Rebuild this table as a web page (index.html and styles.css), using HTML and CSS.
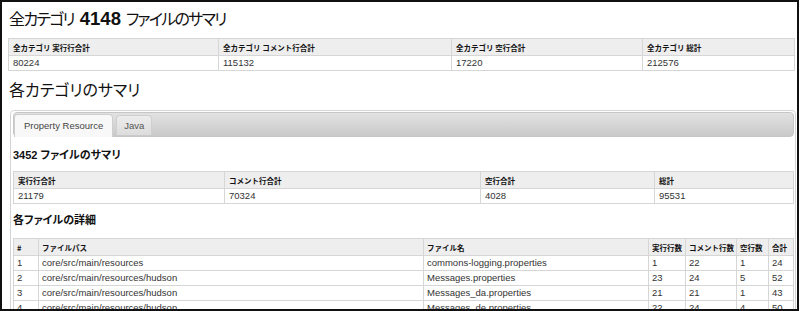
FILE: index.html
```html
<!DOCTYPE html>
<html lang="ja">
<head>
<meta charset="utf-8">
<link rel="stylesheet" href="styles.css">
</head>
<body>
<div class="frame">
  <h1 class="title">全カテゴリ <b>4148</b> ファイルのサマリ</h1>
  <table class="grid all">
    <colgroup><col class="c210"><col class="c233"><col class="c191"><col></colgroup>
    <thead><tr><th>全カテゴリ 実行行合計</th><th>全カテゴリ コメント行合計</th><th>全カテゴリ 空行合計</th><th>全カテゴリ 総計</th></tr></thead>
    <tbody><tr><td>80224</td><td>115132</td><td>17220</td><td>212576</td></tr></tbody>
  </table>
  <h2 class="subtitle">各カテゴリのサマリ</h2>
  <div class="tabs">
    <div class="tabbar">
      <span class="tab active">Property Resource</span>
      <span class="tab">Java</span>
    </div>
    <div class="panel">
      <h3 class="sec">3452 ファイルのサマリ</h3>
      <table class="grid sum">
        <colgroup><col class="c211"><col class="c256"><col class="c174"><col></colgroup>
        <thead><tr><th>実行行合計</th><th>コメント行合計</th><th>空行合計</th><th>総計</th></tr></thead>
        <tbody><tr><td>21179</td><td>70324</td><td>4028</td><td>95531</td></tr></tbody>
      </table>
      <h3 class="sec detail">各ファイルの詳細</h3>
      <table class="grid files">
        <colgroup><col class="c25"><col class="c385"><col class="c225"><col class="c37"><col class="c51"><col class="c32"><col></colgroup>
        <thead><tr><th>#</th><th>ファイルパス</th><th>ファイル名</th><th>実行行数</th><th>コメント行数</th><th>空行数</th><th>合計</th></tr></thead>
        <tbody>
          <tr><td>1</td><td>core/src/main/resources</td><td>commons-logging.properties</td><td>1</td><td>22</td><td>1</td><td>24</td></tr>
          <tr><td>2</td><td>core/src/main/resources/hudson</td><td>Messages.properties</td><td>23</td><td>24</td><td>5</td><td>52</td></tr>
          <tr><td>3</td><td>core/src/main/resources/hudson</td><td>Messages_da.properties</td><td>21</td><td>21</td><td>1</td><td>43</td></tr>
          <tr><td>4</td><td>core/src/main/resources/hudson</td><td>Messages_de.properties</td><td>22</td><td>24</td><td>4</td><td>50</td></tr>
        </tbody>
      </table>
    </div>
  </div>
</div>
</body>
</html>
```
FILE: styles.css
```css
html, body { margin: 0; padding: 0; background: #fff; }
body { font-family: "Liberation Sans", "Noto Sans CJK JP", sans-serif; font-size: 9.5px; color: #222; }
.frame {
  box-sizing: border-box;
  width: 799px;
  height: 311px;
  border: 2px solid #111;
  overflow: hidden;
  padding: 0 2px 0 6px;
}
.title {
  margin: 4px 0 0 1px;
  font-family: "Noto Sans CJK JP", sans-serif;
  font-feature-settings: "palt";
  font-size: 16px;
  font-weight: 400;
  line-height: 24px;
  letter-spacing: -1.7px;
  color: #111;
}
.title b {
  display: inline-block;
  font-family: "Liberation Sans", sans-serif;
  font-weight: 700;
  font-size: 18.5px;
  letter-spacing: 0;
  margin: 0 3px 0 4px;
}
.c210 { width: 210px; } .c233 { width: 233px; } .c191 { width: 191px; }
.c211 { width: 211px; } .c256 { width: 256px; } .c174 { width: 174px; }
.c25 { width: 25px; } .c385 { width: 385px; } .c225 { width: 225px; }
.c37 { width: 37px; } .c51 { width: 51px; } .c32 { width: 32px; }
.grid {
  border-collapse: collapse;
  table-layout: fixed;
  font-size: 9.5px;
}
.grid.all { margin-top: 7px; width: 787px; }
.grid th, .grid td {
  border: 1px solid #d6d6d6;
  text-align: left;
  padding: 0 4px;
  white-space: nowrap;
  overflow: hidden;
}
.grid th {
  background: #eeeeee;
  font-family: "Noto Sans CJK JP", sans-serif;
  font-weight: 700;
  font-size: 7.5px;
  height: 16px;
  color: #111;
}
.grid td { height: 14px; color: #333; line-height: 14px; }
.subtitle {
  margin: 7px 0 0 1px;
  font-family: "Noto Sans CJK JP", sans-serif;
  font-feature-settings: "palt";
  font-size: 16px;
  font-weight: 400;
  line-height: 22px;
  color: #111;
}
.tabs {
  box-sizing: border-box;
  margin: 10px 0 0 2px;
  width: 786px;
  height: 300px;
  border: 1px solid #d4d4d4;
  border-radius: 4px;
  padding: 1px 1px 0 2px;
}
.tabbar {
  box-sizing: border-box;
  display: flex;
  align-items: flex-end;
  gap: 3px;
  height: 25px;
  border: 1px solid #c6c6c6;
  border-radius: 4px;
  background: linear-gradient(#e2e2e2, #c9c9c9);
}
.tab {
  box-sizing: border-box;
  font-size: 9.5px;
  color: #555;
  padding: 0 7px;
  height: 20px;
  line-height: 19px;
  margin-bottom: 1px;
  border: 1px solid #cfcfcf;
  border-bottom: none;
  border-radius: 4px 4px 0 0;
  background: linear-gradient(#ededed, #dcdcdc);
}
.tab.active {
  background: #f8f8f8;
  height: 23px;
  margin-bottom: -1px;
  padding: 0 9px;
  line-height: 21px;
  color: #444;
}
.sec {
  margin: 11px 0 0 0;
  font-family: "Liberation Sans", "Noto Sans CJK JP", sans-serif;
  font-feature-settings: "palt";
  font-size: 11px;
  font-weight: 700;
  line-height: 14px;
  color: #111;
}
.grid.sum { width: 781px; margin-top: 9px; }
.sec.detail { margin-top: 9px; }
.grid.files { width: 781px; margin-top: 11px; }
.grid.files th, .grid.files td { padding: 0 3px; }
```
